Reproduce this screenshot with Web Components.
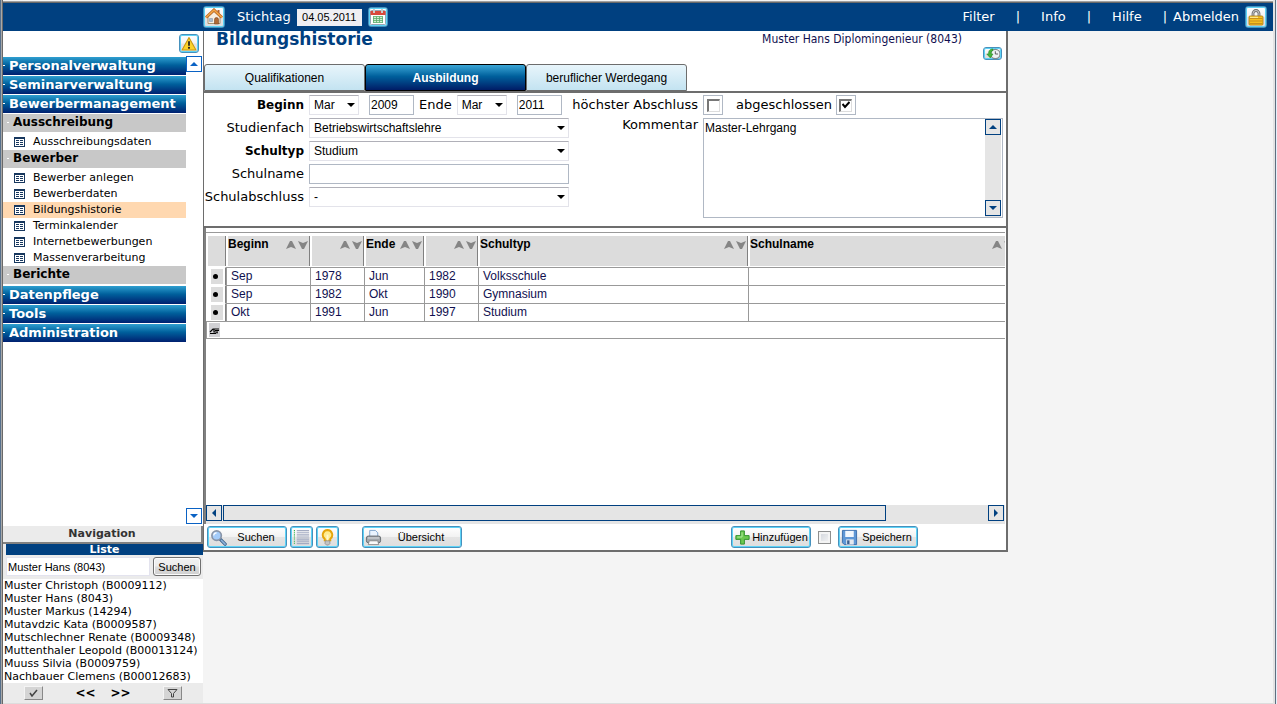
<!DOCTYPE html>
<html lang="de">
<head>
<meta charset="utf-8">
<title>Bildungshistorie</title>
<style>
    :root {
        --sans: "DejaVu Sans", Verdana, sans-serif;
        --arial: "Liberation Sans", Arial, sans-serif;
        --navy: #004080;
        --line: #6d6d6d;
    }
    body {
        margin: 0;
        background: #f4f4f4;
        font: 13px/16px var(--sans);
        color: #000;
    }
</style>
</head>
<body>
<hr-app></hr-app>

<script>
// attach an open shadow root holding the given markup
function render(el, html) {
    el.attachShadow({ mode: 'open' });
    el.shadowRoot.innerHTML = html;
}

const ICONS = {
    home: `<path d="M3 9v6.5h12V9L9 3.500z" fill="#f8efe0" stroke="#9a7a50" stroke-width=".8"/>
        <path d="M12.500 2h2v4l-2-2z" fill="#b5632d"/>
        <path d="M1 9.500 9 2l8 7.500" fill="none" stroke="#b8641f" stroke-width="3"/>
        <path d="M1 9.500 9 2l8 7.500" fill="none" stroke="#f6a848" stroke-width="1.500"/>
        <path d="M9.500 16v-4.500a2 2 0 0 1 4 0V16z" fill="#b06a35" stroke="#7a4520" stroke-width=".6"/>
        <path d="M4.500 10.500h3v3h-3zM6 10.500v3M4.500 12h3" fill="#d8e6f4" stroke="#8194a8" stroke-width=".6"/>`,
    calendar: `<rect x="1.500" y="2.500" width="15" height="14" rx="1" fill="#fff" stroke="#98a4b4"/>
        <path d="M1.500 3h15v4h-15z" fill="#d9493c"/>
        <path d="M5 1v4M13 1v4" stroke="#a8a8a8" stroke-width="2"/><path d="M5 1v4M13 1v4" stroke="#eee"/>
        <path d="M4 8.500h10v6H4z" fill="#d3efd6"/>
        <path d="M4 8.500h10M4 10.500h10M4 12.500h10M4 14.500h10M4.500 8.500v6M7.500 8.500v6M10.500 8.500v6M13.500 8.500v6" stroke="#5bab69" stroke-width=".8"/>`,
    lock: `<path d="M6 9V5.500a3 3 0 0 1 6 0V9" fill="none" stroke="#707070" stroke-width="2.800"/>
        <path d="M6 9V5.500a3 3 0 0 1 6 0V9" fill="none" stroke="#ccc" stroke-width="1"/>
        <rect x="2" y="8" width="14" height="9" rx="1" fill="#f5c020" stroke="#a87a10" stroke-width=".8"/>
        <path d="M2.500 10.500h13M2.500 13h13M2.500 15.500h13" stroke="#c8901c"/><path d="M3 9.300h8" stroke="#fff0a0"/>`,
    warn: `<path d="M9 1.800 16.800 15.800H1.200z" fill="#fbd32c" stroke="#c99812" stroke-width="1.200" stroke-linejoin="round"/>
        <path d="M9 6v5" stroke="#222" stroke-width="2"/><circle cx="9" cy="13.300" r="1.200" fill="#222"/>`,
    clock: `<circle cx="12" cy="9" r="6" fill="#eef2f4" stroke="#808a90" stroke-width="1.500"/>
        <path d="M12 5.500V9h3.500" fill="none" stroke="#555" stroke-width="1.200"/>
        <path d="M9 2.500C4 2.500 3 6 3.500 9H1l4.500 5L9 9H6.800C6.500 6.500 7 5 9 4.500z" fill="#45b53c" stroke="#23821f" stroke-width=".7"/>`,
    search: `<path d="m11 11 5 5" stroke="#40648c" stroke-width="3.600" stroke-linecap="round"/>
        <path d="m12 12 4 4" stroke="#8fb4dc" stroke-width="1.600" stroke-linecap="round"/>
        <circle cx="7" cy="7" r="5" fill="#a4ccfa" stroke="#8995a8" stroke-width="1.800"/>
        <path d="M4 7a3 3 0 0 1 3-3" fill="none" stroke="#fff" stroke-width="1.300"/>`,
    lines: `<path d="M4 1.500h13M4 3.500h13M4 5.500h13M4 7.500h13M4 9.500h13M4 11.500h13M4 13.500h13M4 15.500h13" stroke="#a3abc2" stroke-width="1.100"/>
        <path d="M1.500 1v15" stroke="#2fb04a" stroke-width="1.200" stroke-dasharray="1 1"/>`,
    bulb: `<path d="M9 1a5.200 5.200 0 0 0-3 9.300V12h6v-1.700A5.200 5.200 0 0 0 9 1z" fill="#ffec90" stroke="#e5a50c" stroke-width="2"/>
        <path d="M6.500 12.500h5v3l-1.500 1.500H8l-1.500-1.500z" fill="#c4c4c4" stroke="#888" stroke-width=".8"/>
        <path d="M9 6v6" stroke="#fff8d0" stroke-width="2"/>`,
    printer: `<path d="M5 1.500h6l2.500 2.500v5H5z" fill="#eaf4ff" stroke="#7da4cc"/>
        <rect x="1.500" y="7.500" width="15" height="7" rx="2" fill="#a3a8ad" stroke="#64696e"/>
        <path d="M3 9.500h12" stroke="#e0e3e6"/><path d="M4.500 12.500h9l1 4h-11z" fill="#fafafa" stroke="#777" stroke-width=".8"/>`,
    plus: `<path d="M7 2h4v5h5v4h-5v5H7v-5H2V7h5z" fill="#6cc951" stroke="#2e8e2b" stroke-linejoin="round"/>
        <path d="M8.500 3.500v5h-5" fill="none" stroke="#b4eca0"/>`,
    disk: `<path d="M1.500 1.500h15v15h-13l-2-2z" fill="#5f97d6" stroke="#3b6dab"/>
        <path d="M4.500 2h9v6.500h-9z" fill="#f2f7fd"/><path d="M5.500 11h8v5.500h-8z" fill="#e4e8ee"/>
        <path d="M6.500 12h2.500v4H6.500z" fill="#3b5f90"/>`
};

class UiIcon extends HTMLElement {
    connectedCallback() {
        render(this, `
        <style>
            :host { display: inline-flex; flex: none; }
            svg { display: block; width: var(--icon-size, 18px); height: var(--icon-size, 18px); }
        </style>
        <svg viewBox="0 0 18 18" aria-hidden="true">${ICONS[this.getAttribute('name')]}</svg>`);
    }
}

// glossy button with a cyan rim, icon slot and optional caption
class ToolButton extends HTMLElement {
    connectedCallback() {
        const label = this.getAttribute('label');
        render(this, `
        <style>
            :host { display: inline-flex; flex: none; }
            button {
                display: flex;
                align-items: center;
                justify-content: center;
                gap: 1px;
                box-sizing: border-box;
                width: var(--w, 22px);
                height: var(--h, 22px);
                padding: 0 2px;
                border: 1px solid #4691bd;
                border-radius: 3px;
                box-shadow: inset 0 0 0 1px #5dd3f7;
                background: linear-gradient(#fff, #f2f2f2 49%, #e4e4e4 51%, #dedede);
                font: 11px/16px var(--arial);
                color: #000;
            }
            span { flex: 1; text-align: center; }
        </style>
        <button type="button" ${label ? `aria-label="${label}"` : ''}>
            <slot name="icon"></slot>
            ${label ? '' : '<span><slot></slot></span>'}
        </button>`);
    }
}

class ScrollButton extends HTMLElement {
    connectedCallback() {
        const dir = this.getAttribute('dir');
        const turn = { up: 0, right: 90, down: 180, left: 270 }[dir];
        const name = { up: 'Nach oben', right: 'Nach rechts', down: 'Nach unten', left: 'Nach links' }[dir];
        render(this, `
        <style>
            :host { display: inline-flex; flex: none; color: var(--navy); }
            button {
                display: grid;
                place-items: center;
                box-sizing: border-box;
                width: 16px;
                height: 16px;
                padding: 0;
                border: 1px solid currentColor;
                background: var(--face, #e5e5e5);
                color: inherit;
            }
            svg { display: block; transform: rotate(${turn}deg); }
        </style>
        <button type="button" aria-label="${name}">
            <svg width="8" height="8" viewBox="0 0 8 8"><path d="M4 2 8 6H0z" fill="currentColor"/></svg>
        </button>`);
    }
}

class TopBar extends HTMLElement {
    constructor() {
        super();
        render(this, `
        <style>
            :host {
                display: flex;
                align-items: center;
                height: 28px;
                padding: 0 6px 0 200px;
                background: var(--navy);
                color: #fff;
            }
            form { display: flex; align-items: center; gap: 6px; margin: 0; }
            label { margin-left: 6px; }
            input {
                box-sizing: border-box;
                width: 65px;
                height: 17px;
                padding: 0;
                border: 0;
                background: #efeff3;
                font: 11px/16px var(--arial);
                text-align: center;
            }
            nav { display: flex; align-items: center; gap: 21px; margin-left: auto; }
            .last { display: flex; align-items: center; gap: 6px; }
            a { color: inherit; text-decoration: none; }
        </style>
        <form>
            <tool-button label="Startseite"><ui-icon slot="icon" name="home"></ui-icon></tool-button>
            <label for="stichtag">Stichtag</label>
            <input id="stichtag" type="text" value="04.05.2011">
            <tool-button label="Kalender" style="--w: 20px; --h: 20px"><ui-icon slot="icon" name="calendar"></ui-icon></tool-button>
        </form>
        <nav>
            <a href="#filter">Filter</a><span>|</span>
            <a href="#info">Info</a><span>|</span>
            <a href="#hilfe">Hilfe</a>
            <div class="last">
                <span>|</span><a href="#abmelden">Abmelden</a>
                <tool-button label="Sperren"><ui-icon slot="icon" name="lock"></ui-icon></tool-button>
            </div>
        </nav>`);
    }
}

// level="main" is a blue bar, level="sub" a grey one
class NavSection extends HTMLElement {
    connectedCallback() {
        render(this, `
        <style>
            :host { display: block; font-weight: bold; }
            a { display: block; position: relative; height: 18px; line-height: 17px; text-decoration: none; }
            a::before { content: ""; position: absolute; top: 8px; left: 0; width: 2px; height: 1px; background: #fff; }
            :host([level="main"]) a {
                margin-bottom: 1px;
                padding-left: 6px;
                background: linear-gradient(#2f9fd0, #00609c 45%, #002070);
                color: #fff;
            }
            :host([level="sub"]) a {
                padding-left: 10px;
                background: #c8c8c8;
                color: #000;
                font-size: 12px;
                line-height: 16px;
            }
            :host([level="sub"]) a::before { left: 4px; }
            .items { padding-top: 2px; }
            .items[hidden] { display: none; }
        </style>
        <a href="#"><slot name="title"></slot></a>
        <div class="items" ${this.getAttribute('level') === 'sub' ? '' : 'hidden'}><slot></slot></div>`);
    }
}

class NavItem extends HTMLElement {
    constructor() {
        super();
        render(this, `
        <style>
            :host { display: block; font-weight: normal; }
            a {
                display: flex;
                align-items: center;
                gap: 8px;
                padding-left: 11px;
                color: #000;
                font-size: 11px;
                line-height: 16px;
                text-decoration: none;
            }
            :host([active]) a { background: #ffd8b0; }
        </style>
        <a href="#">
            <svg width="11" height="10" viewBox="0 0 11 10" aria-hidden="true">
                <path d="M0 0h11v10H0z" fill="#17375e"/><path d="M1 2h9v7H1z" fill="#fff"/>
                <path d="M2 3.500h3M6 3.500h3M2 5.500h3M6 5.500h3M2 7.500h3M6 7.500h3" stroke="#17375e"/>
            </svg>
            <slot></slot>
        </a>`);
    }
}

class SideNav extends HTMLElement {
    constructor() {
        super();
        render(this, `
        <style>
            :host { display: flex; flex-direction: column; background: #fff; }
            .tools { display: flex; justify-content: flex-end; padding: 3px 4px 3px 0; }
            .body { display: flex; flex: 1; align-items: stretch; }
            nav { flex: 1; padding-top: 1px; }
            .bar { display: flex; flex-direction: column; justify-content: space-between; padding: 0 1px 2px 0; }
            scroll-button { --face: #fff; color: #0a62c4; }
            footer {
                border-right: 2px solid #808080;
                border-bottom: 2px solid #808080;
                background: #ebebeb;
                color: #333;
                font: bold 11px/16px var(--sans);
                text-align: center;
            }
        </style>
        <div class="tools">
            <tool-button label="Hinweise" style="--w: 20px; --h: 19px; --icon-size: 16px"><ui-icon slot="icon" name="warn"></ui-icon></tool-button>
        </div>
        <div class="body">
            <nav>
                <nav-section level="main"><span slot="title">Personalverwaltung</span></nav-section>
                <nav-section level="main"><span slot="title">Seminarverwaltung</span></nav-section>
                <nav-section level="main"><span slot="title">Bewerbermanagement</span></nav-section>
                <nav-section level="sub"><span slot="title">Ausschreibung</span>
                    <nav-item>Ausschreibungsdaten</nav-item>
                </nav-section>
                <nav-section level="sub"><span slot="title">Bewerber</span>
                    <nav-item>Bewerber anlegen</nav-item>
                    <nav-item>Bewerberdaten</nav-item>
                    <nav-item active>Bildungshistorie</nav-item>
                    <nav-item>Terminkalender</nav-item>
                    <nav-item>Internetbewerbungen</nav-item>
                    <nav-item>Massenverarbeitung</nav-item>
                </nav-section>
                <nav-section level="sub"><span slot="title">Berichte</span></nav-section>
                <nav-section level="main"><span slot="title">Datenpflege</span></nav-section>
                <nav-section level="main"><span slot="title">Tools</span></nav-section>
                <nav-section level="main"><span slot="title">Administration</span></nav-section>
            </nav>
            <div class="bar">
                <scroll-button dir="up"></scroll-button>
                <scroll-button dir="down"></scroll-button>
            </div>
        </div>
        <footer>Navigation</footer>`);
    }
}

class PersonList extends HTMLElement {
    constructor() {
        super();
        const people = [
            'Muster Christoph (B0009112)', 'Muster Hans (8043)', 'Muster Markus (14294)',
            'Mutavdzic Kata (B0009587)', 'Mutschlechner Renate (B0009348)',
            'Muttenthaler Leopold (B00013124)', 'Muuss Silvia (B0009759)', 'Nachbauer Clemens (B00012683)'
        ];
        render(this, `
        <style>
            :host { display: block; background: #ebebeb; font-size: 11px; }
            h2 {
                margin: 0 0 0 3px;
                background: var(--navy);
                color: #fff;
                font: bold 11px/11px var(--sans);
                text-align: center;
            }
            form { display: flex; gap: 3px; margin: 0; padding: 2px 2px 3px 3px; }
            input {
                flex: 1;
                min-width: 0;
                box-sizing: border-box;
                height: 19px;
                padding: 0 1px;
                border: 1px solid #e3e3ee;
                background: #fff;
                font: 11px/16px var(--arial);
            }
            form button {
                width: 48px;
                height: 19px;
                padding: 0;
                border: 1px solid #707070;
                border-radius: 3px;
                box-shadow: inset 0 0 0 1px #fcfcfc;
                background: linear-gradient(#f2f2f2, #ebebeb 49%, #ddd 51%, #cfcfcf);
                font: 11px/16px var(--arial);
            }
            ul { margin: 0; padding: 0 0 0 1px; background: #fff; list-style: none; line-height: 13px; }
            li { white-space: nowrap; }
            a { color: #000; text-decoration: none; }
            footer { display: flex; align-items: center; padding: 0 21px; height: 20px; }
            footer button { padding: 0; border: 0; background: none; font: bold 12px/16px var(--sans); }
            footer .key {
                display: grid;
                place-items: center;
                box-sizing: border-box;
                width: 19px;
                height: 14px;
                border: 1px solid;
                border-color: #f4f4f4 #888 #888 #f4f4f4;
                background: #d4d4d4;
            }
            .pager { display: flex; flex: 1; justify-content: center; gap: 15px; }
        </style>
        <h2>Liste</h2>
        <form>
            <input type="text" aria-label="Name" value="Muster Hans (8043)">
            <button type="button">Suchen</button>
        </form>
        <ul>${people.map(p => `<li><a href="#">${p}</a></li>`).join('')}</ul>
        <footer>
            <button type="button" class="key" aria-label="Auswählen">
                <svg width="9" height="8" viewBox="0 0 9 8"><path d="m1 4 2 3 5-6" fill="none" stroke="#444" stroke-width="1.500"/></svg>
            </button>
            <div class="pager">
                <button type="button">&lt;&lt;</button>
                <button type="button">&gt;&gt;</button>
            </div>
            <button type="button" class="key" aria-label="Filtern">
                <svg width="11" height="9" viewBox="0 0 11 9"><path d="M1 .5h9L6.500 4.500V8h-2V4.500z" fill="none" stroke="#444"/></svg>
            </button>
        </footer>`);
    }
}

class TabStrip extends HTMLElement {
    connectedCallback() {
        this.setAttribute('role', 'tablist');
        render(this, `
        <style>
            :host { display: flex; border-bottom: 2px solid var(--line); }
            ::slotted(button) {
                box-sizing: border-box;
                width: 161px;
                height: 27px;
                padding: 0;
                border: 1px solid var(--line);
                border-radius: 3px 3px 0 0;
                background: linear-gradient(#e8f5fb, #c3e3f1);
                color: #000;
                font: 12px/16px var(--arial);
            }
            ::slotted(button[aria-selected="true"]) {
                border-color: #000;
                background: linear-gradient(#3ba6d6, #00609c 45%, #001c66);
                color: #fff;
                font-weight: bold;
            }
        </style>
        <slot></slot>`);
    }
}

class HistoryForm extends HTMLElement {
    constructor() {
        super();
        // a drop-down and its arrow share one grid cell
        const select = (id, value) => `
            <span class="select"><select id="${id}"><option>${value}</option></select>
            <svg width="8" height="4" viewBox="0 0 8 4" aria-hidden="true"><path d="M0 0h8L4 4z"/></svg></span>`;
        render(this, `
        <style>
            :host { display: block; background: #fff; }
            form { display: flex; margin: 0; padding: 2px 3px 8px 0; border-bottom: 2px solid var(--line); }
            .left { display: grid; grid-template-columns: 100px 260px; grid-auto-rows: 20px; gap: 3px 5px; }
            .right {
                display: grid;
                flex: 1;
                grid-template: 20px 100px / 129px 1fr;
                gap: 3px 5px;
            }
            label { align-self: center; text-align: right; white-space: nowrap; }
            .top { align-self: start; line-height: 13px; }
            .need { font-size: 12px; font-weight: bold; }
            .row { display: flex; }
            .row .select { width: 50px; }
            .row input[type="text"] { width: 45px; margin-left: 10px; }
            .row label { margin: 0 5px; }
            .right .row label { margin: 0 4px 0 13px; }
            .select { display: grid; align-items: center; }
            .select > * { grid-area: 1 / 1; }
            .select svg { justify-self: end; margin-right: 4px; pointer-events: none; }
            select, input[type="text"], .memo {
                box-sizing: border-box;
                width: 100%;
                height: 20px;
                border: 1px solid #b0b8c4;
                border-radius: 0;
                background: #fff;
                color: #000;
                font: 12px/16px var(--arial);
            }
            select { appearance: none; padding: 0 4px; border-color: #b0b0b8 #e3e3ea #e3e3ea #e3e3ea; }
            input[type="text"] { padding: 0 1px; }
            .box { display: grid; place-items: center; box-sizing: border-box; width: 20px; height: 20px; border: 1px solid #b0b8c4; }
            input[type="checkbox"] {
                appearance: none;
                box-sizing: border-box;
                width: 13px;
                height: 13px;
                margin: 0;
                border: solid;
                border-width: 2px 1px 1px 2px;
                border-color: #777 #ddd #ddd #777;
            }
            .box > * { grid-area: 1 / 1; }
            .box svg { z-index: 1; pointer-events: none; }
            .memo { display: flex; height: 100px; padding-right: 1px; }
            textarea { flex: 1; min-width: 0; padding: 1px; border: 0; resize: none; font: inherit; }
            .bar { display: flex; flex-direction: column; justify-content: space-between; padding-bottom: 1px; background: #e5e5e5; }
        </style>
        <form>
            <div class="left">
                <label class="need" for="bm">Beginn</label>
                <div class="row">
                    ${select('bm', 'Mar')}
                    <input type="text" aria-label="Beginn Jahr" value="2009">
                    <label for="em">Ende</label>
                    ${select('em', 'Mar')}
                    <input type="text" aria-label="Ende Jahr" value="2011">
                </div>
                <label for="fach">Studienfach</label>${select('fach', 'Betriebswirtschaftslehre')}
                <label class="need" for="typ">Schultyp</label>${select('typ', 'Studium')}
                <label for="name">Schulname</label><input id="name" type="text">
                <label for="abschluss">Schulabschluss</label>${select('abschluss', '-')}
            </div>
            <div class="right">
                <label for="hoch">höchster Abschluss</label>
                <div class="row">
                    <span class="box"><input id="hoch" type="checkbox"></span>
                    <label for="fertig">abgeschlossen</label>
                    <span class="box"><input id="fertig" type="checkbox" checked>
                        <svg width="8" height="8" viewBox="0 0 8 8"><path d="m.5 3 2.500 3L7.500 1" fill="none" stroke="#000" stroke-width="2"/></svg></span>
                </div>
                <label class="top" for="memo">Kommentar</label>
                <div class="memo">
                    <textarea id="memo">Master-Lehrgang</textarea>
                    <div class="bar"><scroll-button dir="up"></scroll-button><scroll-button dir="down"></scroll-button></div>
                </div>
            </div>
        </form>`);
    }
}

class HistoryTable extends HTMLElement {
    constructor() {
        super();
        const heads = ['Beginn', '', 'Ende', '', 'Schultyp', 'Schulname'];
        const rows = [
            ['Sep', '1978', 'Jun', '1982', 'Volksschule', ''],
            ['Sep', '1982', 'Okt', '1990', 'Gymnasium', ''],
            ['Okt', '1991', 'Jun', '1997', 'Studium', '']
        ];
        const sort = `
            <button type="button" aria-label="Aufsteigend"><svg width="10" height="8" viewBox="0 0 10 8"><path d="M4 0h2l4 8-5-2-5 2z"/></svg></button>
            <button type="button" aria-label="Absteigend"><svg width="10" height="8" viewBox="0 0 10 8"><path d="M4 8h2l4-8-5 2-5-2z"/></svg></button>`;
        render(this, `
        <style>
            :host {
                display: flex;
                flex-direction: column;
                box-sizing: border-box;
                border-left: 2px solid #808080;
                background: #fff;
                color: #101050;
                font: 12px/16px var(--arial);
            }
            .view { min-height: 272px; margin: 4px 1px 0 0; border-top: 1px solid #999; overflow: hidden; }
            table { width: 810px; margin-top: 1px; border-collapse: separate; border-spacing: 0; table-layout: fixed; }
            th, td { box-sizing: border-box; padding: 0; text-align: left; }
            th {
                height: 33px;
                padding: 2px 0 0;
                border: solid #fff;
                border-width: 2px 0 1px 2px;
                box-shadow: inset -1px 0 #808080;
                background: #dcdcdc;
                color: #000;
                line-height: 13px;
                vertical-align: top;
            }
            .head { display: flex; align-items: center; gap: 2px; height: 13px; padding-right: 2px; }
            .head span { flex: 1; }
            .head button { padding: 0; border: 0; background: none; line-height: 0; }
            path { fill: #858585; }
            td { height: 18px; padding: 0 0 1px 4px; border-top: 1px solid #999; border-left: 1px solid #999; }
            td.mark { padding: 0 2px 1px 4px; border-color: transparent; border-right: 1px solid #808080; }
            .mark span { display: grid; place-items: center start; height: 15px; padding-left: 2px; background: #dcdcdc; }
            .mark i { width: 5px; height: 5px; border-radius: 50%; background: #000; }
            .new td { border-bottom: 1px solid #999; padding: 0 0 0 2px; }
            .new svg { display: block; background: #d0d0d4; }
            .new path { fill: none; stroke: #000; }
            .bar { display: flex; margin-right: 1px; padding: 0 1px 3px 0; background: #e5e5e5; }
            .thumb { flex: 13; box-sizing: border-box; margin-left: 1px; border: 1px solid var(--navy); }
            .rest { flex: 2; }
        </style>
        <div class="view">
            <table>
                <colgroup><col style="width: 20px"><col style="width: 84px"><col style="width: 54px"><col style="width: 60px"><col style="width: 54px"><col style="width: 270px"><col></colgroup>
                <thead><tr><th></th>${heads.map(h => `<th><div class="head"><span>${h}</span>${sort}</div></th>`).join('')}</tr></thead>
                <tbody>
                    ${rows.map(r => `<tr><td class="mark"><span><i></i></span></td>${r.map(c => `<td>${c}</td>`).join('')}</tr>`).join('')}
                    <tr class="new"><td colspan="7"><svg width="11" height="14" viewBox="0 0 11 14"><path d="M1 10.500h6M1 9l3-3h6M5 6v3h4M6 7.500h4M8 9v1.500" stroke-width="1.200"/></svg></td></tr>
                </tbody>
            </table>
        </div>
        <div class="bar">
            <scroll-button dir="left"></scroll-button>
            <div class="thumb"></div><div class="rest"></div>
            <scroll-button dir="right"></scroll-button>
        </div>`);
    }
}

class ActionBar extends HTMLElement {
    constructor() {
        super();
        render(this, `
        <style>
            :host { display: flex; align-items: center; gap: 3px; height: 26px; padding: 0 88px 0 3px; background: #fff; }
            .print { margin-left: 20px; }
            .end { display: flex; align-items: center; gap: 7px; margin-left: auto; }
            input {
                appearance: none;
                box-sizing: border-box;
                width: 13px;
                height: 13px;
                margin: 0;
                border: 1px solid #8e8f8f;
                box-shadow: inset 0 0 0 2px #f4f4f4;
                background: linear-gradient(135deg, #cfd3da, #f6f6f6);
            }
            tool-button { --icon-size: 17px; }
        </style>
        <tool-button style="--w: 80px"><ui-icon slot="icon" name="search"></ui-icon>Suchen</tool-button>
        <tool-button label="Liste" style="--w: 23px"><ui-icon slot="icon" name="lines"></ui-icon></tool-button>
        <tool-button label="Tipp" style="--w: 23px"><ui-icon slot="icon" name="bulb"></ui-icon></tool-button>
        <tool-button class="print" style="--w: 100px"><ui-icon slot="icon" name="printer"></ui-icon>Übersicht</tool-button>
        <div class="end">
            <tool-button style="--w: 80px"><ui-icon slot="icon" name="plus"></ui-icon>Hinzufügen</tool-button>
            <input type="checkbox" aria-label="Kopieren">
            <tool-button style="--w: 80px"><ui-icon slot="icon" name="disk"></ui-icon>Speichern</tool-button>
        </div>`);
    }
}

class HrApp extends HTMLElement {
    constructor() {
        super();
        render(this, `
        <style>
            /* bevelled frame: top, left and right strips behind the content */
            :host {
                display: flex;
                flex-direction: column;
                box-sizing: border-box;
                min-height: 100vh;
                padding: 3px 4px 1px 3px;
                background:
                    linear-gradient(90deg, #56708c 1px, #a8a8a8 1px 2px, #696969 2px) left / 3px 100% no-repeat,
                    linear-gradient(90deg, #e3e3e3 2px, #5f6f80 2px 3px, #e4f0fa 3px) right / 4px 100% no-repeat,
                    linear-gradient(#f4f4f4 1px, #a0a0a0 1px 2px, #696969 2px) top / 100% 3px no-repeat,
                    linear-gradient(#ddd, #ddd) bottom / 100% 1px no-repeat,
                    #f4f4f4;
            }
            .main { display: flex; flex: 1; align-items: flex-start; }
            aside { display: flex; flex: none; flex-direction: column; align-self: stretch; width: 200px; background: #ebebeb; }
            side-nav { flex: 1; }
            section {
                flex: 1;
                box-sizing: border-box;
                min-width: 0;
                max-width: 805px;
                border: solid var(--line);
                border-width: 0 2px 2px 1px;
                background: #fff;
            }
            header { display: flex; justify-content: space-between; height: 33px; padding: 0 4px 0 12px; }
            h1 { margin: 0; color: var(--navy); font: bold 17px/17px var(--sans); }
            .who { display: flex; flex-direction: column; align-items: flex-end; }
            .who span { margin-right: 40px; color: #101050; font: 12px/16px "DejaVu Sans Condensed", "DejaVu Sans", sans-serif; }
        </style>
        <top-bar></top-bar>
        <div class="main">
            <aside>
                <side-nav></side-nav>
                <person-list></person-list>
            </aside>
            <section>
                <header>
                    <h1>Bildungshistorie</h1>
                    <div class="who">
                        <span>Muster Hans Diplomingenieur (8043)</span>
                        <tool-button label="Verlauf" style="--w: 19px; --h: 13px; --icon-size: 14px"><ui-icon slot="icon" name="clock"></ui-icon></tool-button>
                    </div>
                </header>
                <tab-strip>
                    <button type="button" role="tab">Qualifikationen</button>
                    <button type="button" role="tab" aria-selected="true">Ausbildung</button>
                    <button type="button" role="tab">beruflicher Werdegang</button>
                </tab-strip>
                <history-form></history-form>
                <history-table></history-table>
                <action-bar></action-bar>
            </section>
        </div>`);
    }
}

customElements.define("ui-icon", UiIcon);
customElements.define("tool-button", ToolButton);
customElements.define("scroll-button", ScrollButton);
customElements.define("top-bar", TopBar);
customElements.define("nav-section", NavSection);
customElements.define("nav-item", NavItem);
customElements.define("side-nav", SideNav);
customElements.define("person-list", PersonList);
customElements.define("tab-strip", TabStrip);
customElements.define("history-form", HistoryForm);
customElements.define("history-table", HistoryTable);
customElements.define("action-bar", ActionBar);
customElements.define("hr-app", HrApp);
</script>
</body>
</html>
